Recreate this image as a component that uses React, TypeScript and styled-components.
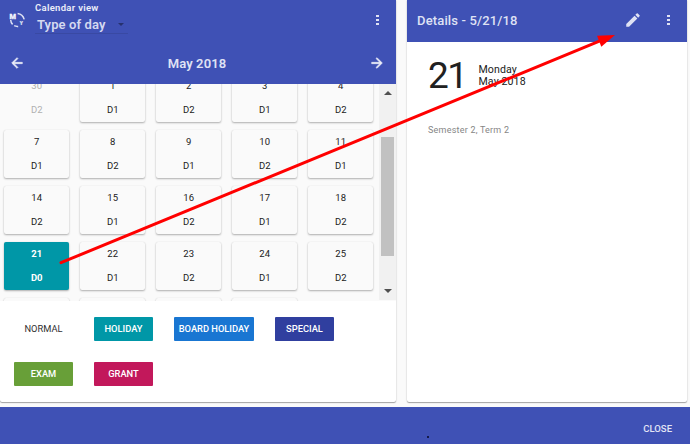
import React from "react";
import styled, { createGlobalStyle, css } from "styled-components";

const GlobalStyle = createGlobalStyle`
  *, *::before, *::after { box-sizing: border-box; }
  body {
    margin: 0;
    background: #fafafa;
    color: #212121;
    font-family: Roboto, "Liberation Sans", sans-serif;
    overflow: hidden;
  }
`;

const Page = styled.div`
  position: relative;
  width: 690px;
  height: 444px;
  display: flex;
  flex-direction: column;
  overflow: hidden;
`;

const Panels = styled.main`
  display: flex;
  gap: 11px;
  height: 402px;
  margin-bottom: 5px;
`;

const Card = styled.section<{ $width: number }>`
  width: ${(p) => p.$width}px;
  display: flex;
  flex-direction: column;
  background: #fff;
  border-radius: 0 0 2px 2px;
  box-shadow: 0 1px 1px rgba(0, 0, 0, 0.32), 0 0 2px rgba(0, 0, 0, 0.16);
`;

const CalendarHeader = styled.header`
  height: 84px;
  background: #3f51b5;
  color: #dfe2f4;
  display: flex;
  flex-direction: column;
`;

const Toolbar = styled.div`
  height: 42px;
  display: flex;
  align-items: center;
  padding: 0 10px 2px 9px;
  gap: 10px;
`;

const ViewField = styled.label`
  display: flex;
  flex-direction: column;
  width: 93px;
  height: 34px;
  margin: 0 auto 0 0;
`;

const FieldLabel = styled.span`
  font-size: 9.5px;
  line-height: 10px;
  font-weight: 600;
  letter-spacing: 0.3px;
  color: #eceef9;
  white-space: nowrap;
`;

const SelectBox = styled.span`
  display: flex;
  align-items: center;
  justify-content: space-between;
  height: 20px;
  margin-top: 1px;
  padding: 1px 4px 0 2px;
  border-bottom: 1px solid #3949a3;
  font-size: 13px;
  font-weight: 600;
  letter-spacing: 0.1px;
  color: #d5d9f0;
  white-space: nowrap;
`;

const MonthBar = styled.div`
  height: 42px;
  display: flex;
  align-items: center;
  justify-content: space-between;
  padding: 0 11px 0 9px;
`;

const MonthTitle = styled.h1`
  margin: 0;
  font-size: 13px;
  font-weight: 600;
  letter-spacing: 0.1px;
`;

const Icon = styled.svg`
  display: block;
  flex: none;
`;

const Scroller = styled.div`
  display: flex;
  height: 217px;
  background: #fafafa;
`;

const Viewport = styled.div`
  width: 379px;
  overflow: hidden;
`;

const DayGrid = styled.div`
  display: grid;
  grid-template-columns: repeat(5, 66px);
  grid-auto-rows: 48px;
  gap: 8px 10px;
  padding-left: 4px;
  margin-top: -10px;
`;

const selectedDay = css`
  background: #0097a7;
  color: #fff;
  font-weight: 700;
`;

const Day = styled.div<{ $kind: "normal" | "outside" | "selected" }>`
  width: 65.4px;
  border-radius: 2px;
  background: #fafafa;
  font-size: 9.5px;
  line-height: 24px;
  text-align: center;
  box-shadow: ${(p) =>
    p.$kind === "outside" ? "none" : "0 1px 2px rgba(0,0,0,.3), 0 0 1px rgba(0,0,0,.1)"};
  ${(p) => p.$kind === "outside" && "color: #b0b0b0;"}
  ${(p) => p.$kind === "selected" && selectedDay}
`;

const DayText = styled.div`
  height: 24px;
`;

const ScrollTrack = styled.div`
  width: 17px;
  height: 216px;
  background: #f1f1f1;
  display: flex;
  flex-direction: column;
  align-items: center;
  padding: 7px 0;
`;

const ScrollThumb = styled.div`
  width: 13px;
  height: 119px;
  margin: 42px 0 33px;
  background: #c1c1c1;
`;

const Legend = styled.div`
  display: flex;
  flex-wrap: wrap;
  gap: 21px;
  padding: 16px 14px 0;
`;

const LegendItem = styled.span<{ $fill?: string; $width?: number }>`
  width: ${(p) => p.$width ?? 59}px;
  height: 24px;
  border-radius: 1px;
  background: ${(p) => p.$fill ?? "transparent"};
  color: ${(p) => (p.$fill ? "#fff" : "#303030")};
  font-size: 9.3px;
  line-height: 24px;
  font-weight: ${(p) => (p.$fill ? 500 : 400)};
  text-align: center;
  white-space: nowrap;
`;

const DetailsHeader = styled.header`
  height: 42px;
  display: flex;
  align-items: center;
  padding: 0 10px 2px 10px;
  background: #3f51b5;
  color: #dfe2f4;
`;

const DetailsTitle = styled.h2`
  margin: 0 auto 0 0;
  font-size: 13px;
  font-weight: 500;
  letter-spacing: 0.15px;
`;

const IconGroup = styled.div`
  display: flex;
  align-items: center;
  gap: 17px;
`;

const DetailsBody = styled.div`
  padding: 13px 21px;
`;

const DateRow = styled.div`
  display: flex;
  align-items: center;
  height: 42px;
`;

const BigDay = styled.span`
  width: 50.5px;
  font-size: 37px;
  line-height: 42px;
  font-weight: 400;
  letter-spacing: -1.5px;
`;

const DateText = styled.span`
  font-size: 10.6px;
  line-height: 12px;
  font-weight: 400;
  letter-spacing: 0.1px;
`;

const Term = styled.p`
  margin: 27px 0 0;
  font-size: 9px;
  line-height: 12px;
  letter-spacing: 0.22px;
  color: #868686;
`;

const Footer = styled.footer`
  height: 37px;
  display: flex;
  align-items: center;
  justify-content: flex-end;
  padding: 6px 18px 0 0;
  background: #3f51b5;
`;

const CloseButton = styled.button`
  border: 0;
  padding: 0;
  background: none;
  color: #e2e5f5;
  font: 500 9.5px Roboto, sans-serif;
`;

const Annotation = styled.svg`
  position: absolute;
  inset: 0;
  pointer-events: none;
`;

const Speck = styled.i`
  position: absolute;
  left: 427px;
  top: 436px;
  width: 2px;
  height: 2px;
  background: #141a48;
`;

const MoreIcon = () => (
  <Icon width="18" height="18" viewBox="0 0 18 18" fill="currentColor">
    <rect x="8" y="4" width="3" height="2" />
    <rect x="8" y="8" width="3" height="2" />
    <rect x="8" y="12" width="3" height="2" />
  </Icon>
);

const ArrowIcon = ({ forward = false }: { forward?: boolean }) => (
  <Icon width="16" height="16" viewBox="0 0 24 24" fill="#eceef9">
    <path
      stroke="#eceef9"
      strokeWidth=".9"
      d={
        forward
          ? "M12 4l-1.41 1.41L16.17 11H4v2h12.17l-5.58 5.59L12 20l8-8z"
          : "M20 11H7.83l5.59-5.59L12 4l-8 8 8 8 1.41-1.41L7.83 13H20z"
      }
    />
  </Icon>
);

const CycleIcon = () => (
  <Icon width="16" height="16" viewBox="0 0 16 16" fill="none" stroke="#dfe2f4">
    <path d="M8.6 1.6C11.8 2 14.2 4 15.2 7.4M1.7 8C1.8 10 2.2 11 3.6 12.4M5.2 13.7C6.4 14.3 7.4 14.6 9.2 14.4" strokeWidth="1.5" />
    <text x="0.5" y="6.5" fill="#f2f3fb" stroke="#f2f3fb" strokeWidth=".3" fontSize="7.4" fontWeight="900" fontFamily="Roboto, sans-serif">M</text>
    <text x="10.8" y="13" fill="#dfe2f4" stroke="#dfe2f4" strokeWidth=".2" fontSize="5" fontWeight="900" fontFamily="Roboto, sans-serif">Y</text>
  </Icon>
);

const PencilIcon = () => (
  <Icon width="18" height="18" viewBox="0 0 24 24" fill="currentColor">
    <path d="M3 17.25V21h3.75L17.81 9.94l-3.75-3.75L3 17.25zM20.71 7.04a1 1 0 0 0 0-1.41l-2.34-2.34a1 1 0 0 0-1.41 0l-1.83 1.83 3.75 3.75 1.83-1.83z" />
  </Icon>
);

const Caret = ({ up = false, width = 8, color }: { up?: boolean; width?: number; color: string }) => (
  <Icon width={width} height={width / 2} viewBox="0 0 8 4" fill={color}>
    <path d={up ? "M0 4h8L4 0z" : "M0 0h8L4 4z"} />
  </Icon>
);

const days = [
  ["30", "D2"], ["1", "D1"], ["2", "D2"], ["3", "D1"], ["4", "D2"],
  ["7", "D1"], ["8", "D2"], ["9", "D1"], ["10", "D2"], ["11", "D1"],
  ["14", "D2"], ["15", "D1"], ["16", "D2"], ["17", "D1"], ["18", "D2"],
  ["21", "D0"], ["22", "D1"], ["23", "D2"], ["24", "D1"], ["25", "D2"],
];

const upcomingDays = 4;

const legend = [
  { name: "NORMAL" },
  { name: "HOLIDAY", fill: "#0097a7" },
  { name: "BOARD HOLIDAY", fill: "#1976d2", width: 80 },
  { name: "SPECIAL", fill: "#303f9f" },
  { name: "EXAM", fill: "#689f38" },
  { name: "GRANT", fill: "#c2185b" },
];

export default function App() {
  return (
    <Page>
      <GlobalStyle />
      <Panels>
        <Card $width={396}>
          <CalendarHeader>
            <Toolbar>
              <CycleIcon />
              <ViewField>
                <FieldLabel>Calendar view</FieldLabel>
                <SelectBox>
                  Type of day
                  <Caret width={6} color="#26316e" />
                </SelectBox>
              </ViewField>
              <MoreIcon />
            </Toolbar>
            <MonthBar>
              <ArrowIcon />
              <MonthTitle>May 2018</MonthTitle>
              <ArrowIcon forward />
            </MonthBar>
          </CalendarHeader>
          <Scroller>
            <Viewport>
              <DayGrid>
                {days.map(([day, type], i) => (
                  <Day key={i} $kind={i === 0 ? "outside" : day === "21" ? "selected" : "normal"}>
                    <DayText>{day}</DayText>
                    <DayText>{type}</DayText>
                  </Day>
                ))}
                {Array.from({ length: upcomingDays }, (_, i) => (
                  <Day key={`upcoming-${i}`} $kind="normal" />
                ))}
              </DayGrid>
            </Viewport>
            <ScrollTrack>
              <Caret up color="#505050" />
              <ScrollThumb />
              <Caret color="#505050" />
            </ScrollTrack>
          </Scroller>
          <Legend>
            {legend.map((item) => (
              <LegendItem key={item.name} $fill={item.fill} $width={item.width}>
                {item.name}
              </LegendItem>
            ))}
          </Legend>
        </Card>
        <Card $width={280}>
          <DetailsHeader>
            <DetailsTitle>Details - 5/21/18</DetailsTitle>
            <IconGroup>
              <PencilIcon />
              <MoreIcon />
            </IconGroup>
          </DetailsHeader>
          <DetailsBody>
            <DateRow>
              <BigDay>21</BigDay>
              <DateText>
                Monday
                <br />
                May 2018
              </DateText>
            </DateRow>
            <Term>Semester 2, Term 2</Term>
          </DetailsBody>
        </Card>
      </Panels>
      <Footer>
        <CloseButton>CLOSE</CloseButton>
      </Footer>
      <Speck />
      <Annotation width="690" height="444" viewBox="0 0 690 444">
        <path d="M61 262.7L603 39.7" stroke="#f00" strokeWidth="3" strokeLinecap="round" />
        <path d="M615 35L597 35.7L601.3 46.7z" fill="#f00" />
      </Annotation>
    </Page>
  );
}
